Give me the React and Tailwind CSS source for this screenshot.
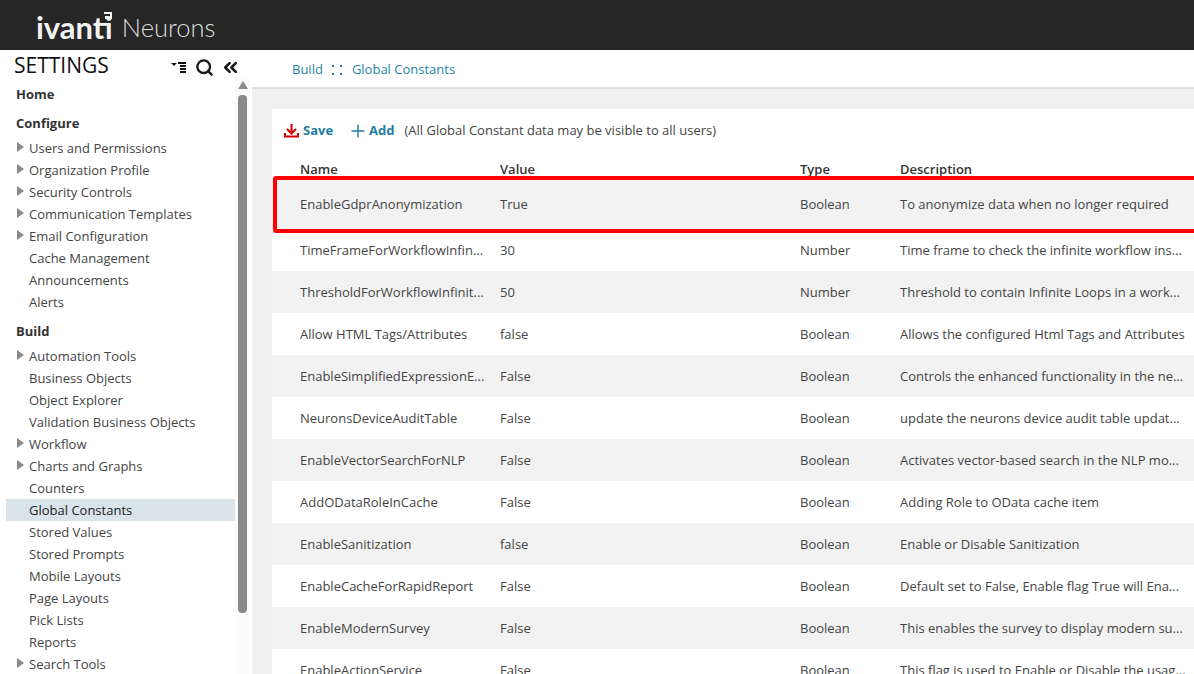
import { Search, ChevronsLeft, Plus } from 'lucide-react'

const nav = [
  { title: 'Home' },
  {
    title: 'Configure',
    items: [
      ['Users and Permissions', true],
      ['Organization Profile', true],
      ['Security Controls', true],
      ['Communication Templates', true],
      ['Email Configuration', true],
      ['Cache Management'],
      ['Announcements'],
      ['Alerts'],
    ],
  },
  {
    title: 'Build',
    items: [
      ['Automation Tools', true],
      ['Business Objects'],
      ['Object Explorer'],
      ['Validation Business Objects'],
      ['Workflow', true],
      ['Charts and Graphs', true],
      ['Counters'],
      ['Global Constants'],
      ['Stored Values'],
      ['Stored Prompts'],
      ['Mobile Layouts'],
      ['Page Layouts'],
      ['Pick Lists'],
      ['Reports'],
      ['Search Tools', true],
    ],
  },
]

const rows = [
  ['EnableGdprAnonymization', 'True', 'Boolean', 'To anonymize data when no longer required'],
  ['TimeFrameForWorkflowInfin...', '30', 'Number', 'Time frame to check the infinite workflow ins...'],
  ['ThresholdForWorkflowInfinit...', '50', 'Number', 'Threshold to contain Infinite Loops in a work...'],
  ['Allow HTML Tags/Attributes', 'false', 'Boolean', 'Allows the configured Html Tags and Attributes'],
  ['EnableSimplifiedExpressionE...', 'False', 'Boolean', 'Controls the enhanced functionality in the ne...'],
  ['NeuronsDeviceAuditTable', 'False', 'Boolean', 'update the neurons device audit table updat...'],
  ['EnableVectorSearchForNLP', 'False', 'Boolean', 'Activates vector-based search in the NLP mo...'],
  ['AddODataRoleInCache', 'False', 'Boolean', 'Adding Role to OData cache item'],
  ['EnableSanitization', 'false', 'Boolean', 'Enable or Disable Sanitization'],
  ['EnableCacheForRapidReport', 'False', 'Boolean', 'Default set to False, Enable flag True will Ena...'],
  ['EnableModernSurvey', 'False', 'Boolean', 'This enables the survey to display modern su...'],
  ['EnableActionService', 'False', 'Boolean', 'This flag is used to Enable or Disable the usag...'],
]

const Sidebar = () => (
  <aside className="w-[252px] shrink-0 h-full flex flex-col bg-white">
    <div className="h-[27px] shrink-0 pl-[14px] relative">
      <span className="block text-[21px] leading-[30px] text-[#111]">SETTINGS</span>
      <div className="absolute left-[170px] top-[7px] flex items-center">
        <svg width="16" height="14" viewBox="0 0 16 14" fill="#111">
          <path d="M1 2h6L4 5z" />
          <rect x="8" y="1" width="8" height="2" />
          <rect x="10" y="4" width="6" height="2" />
          <rect x="10" y="7" width="6" height="2" />
          <rect x="10" y="10" width="6" height="2" />
        </svg>
        <Search size={19} strokeWidth={3} className="ml-[9px] text-[#1a1a1a]" />
        <ChevronsLeft size={21} strokeWidth={3} className="ml-[6px] text-[#1a1a1a]" />
      </div>
    </div>
    <div className="flex-1 flex min-h-0">
      <nav className="w-[235px] shrink-0 pl-[6px] pt-[6px] overflow-hidden">
        {nav.map((sec) => (
          <div key={sec.title} className="mb-[7px]">
            <div className="h-[22px] pl-[10px] mb-[3px] leading-[22px] font-bold text-[13px] text-[#333]">
              {sec.title}
            </div>
            {sec.items &&
              sec.items.map(([label, arrow]) => (
                <div
                  key={label}
                  className={`h-[22px] pl-[23px] leading-[22px] text-[13px] relative ${
                    label === 'Global Constants' ? 'bg-[#d9e3ea] text-[#222]' : 'text-[#444]'
                  }`}
                >
                  {arrow && (
                    <span className="absolute left-[11px] top-[5px] w-0 h-0 border-y-[5px] border-y-transparent border-l-[7px] border-l-[#8a8a8a]" />
                  )}
                  {label}
                </div>
              ))}
          </div>
        ))}
      </nav>
      <div className="w-[15px] shrink-0 bg-[#fbfbfb] flex flex-col items-center">
        <span className="mt-[4px] w-0 h-0 border-x-[5px] border-x-transparent border-b-[8px] border-b-[#8a8a8a]" />
        <div className="mt-[6px] w-[9px] h-[518px] rounded-[4px] bg-[#8a8a8a]" />
      </div>
    </div>
  </aside>
)

const Toolbar = () => (
  <div className="h-[43px] mb-[2px] flex items-center pl-[12px] text-[13px]">
    <svg width="15" height="15" viewBox="0 0 15 15" fill="none" stroke="#d40000" strokeWidth="2">
      <path d="M7.5 1v9M3 6l4.5 4.5L12 6" />
      <path d="M1 10v3.5h13V10" />
    </svg>
    <span className="ml-[4px] font-bold text-[#1f7e9e]">Save</span>
    <Plus size={20} strokeWidth={1.8} className="ml-[15px] text-[#1f7e9e]" />
    <span className="ml-[1px] font-bold text-[#1f7e9e]">Add</span>
    <span className="ml-[10px] text-[#444]">(All Global Constant data may be visible to all users)</span>
  </div>
)

const Table = () => (
  <div className="relative">
    <div className="grid grid-cols-[200px_300px_100px_1fr] pl-[28px] h-[24px] items-end text-[13px] font-semibold text-[#333] leading-[18px]">
      <span>Name</span>
      <span>Value</span>
      <span>Type</span>
      <span>Description</span>
    </div>
    <div className="border-t-2 border-[#e4e4e4]">
      {rows.map((r, i) => (
        <div
          key={r[0]}
          className={`grid grid-cols-[200px_300px_100px_1fr] pl-[28px] items-center text-[13px] text-[#444] whitespace-nowrap ${
            i === 0 ? 'h-[49px] pt-[1px]' : 'h-[42px] pt-[2px]'
          } ${i % 2 === 0 ? 'bg-[#f2f2f2]' : 'bg-white'}`}
        >
          {r.map((c, j) => (
            <span key={j} className="overflow-hidden">
              {c}
            </span>
          ))}
        </div>
      ))}
    </div>
    <div className="absolute left-[1px] right-[-6px] top-[22px] h-[57px] border-4 border-[#ff0000] rounded-[3px] pointer-events-none" />
  </div>
)

export default function App() {
  return (
    <div
      className="w-[1194px] h-[674px] overflow-hidden flex flex-col bg-white"
      style={{ fontFamily: '"Open Sans", sans-serif' }}
    >
      <header className="h-[50px] shrink-0 bg-[#262626] flex items-center pl-[36px] pt-[4px] relative">
        <span className="text-[31px] font-bold text-[#f2f2f2]" style={{ fontFamily: 'Lato, sans-serif' }}>
          ivanti
        </span>
        <svg className="absolute left-[103px] top-[12px]" width="9" height="9" viewBox="0 0 9 9" fill="#f2f2f2">
          <path d="M1 0h8v7H7V2H1z" />
          <rect x="2" y="4" width="3" height="3" />
        </svg>
        <span className="ml-[9px] text-[25.5px] font-light text-[#dcdcdc]" style={{ fontFamily: 'Lato, sans-serif' }}>
          Neurons
        </span>
      </header>
      <div className="flex-1 flex min-h-0">
        <Sidebar />
        <main className="flex-1 min-w-0 flex flex-col">
          <div className="h-[39px] shrink-0 flex items-center pl-[40px] pt-[2px] text-[13px] text-[#1f86a8] border-b-2 border-[#e0e0e0] bg-white">
            <span>Build</span>
            <svg className="ml-[9px] mr-[10px]" width="10" height="12" viewBox="0 0 10 12" fill="#1f86a8">
              <rect x="0" y="1" width="2" height="2" />
              <rect x="8" y="1" width="2" height="2" />
              <rect x="0" y="9" width="2" height="2" />
              <rect x="8" y="9" width="2" height="2" />
            </svg>
            <span>Global Constants</span>
          </div>
          <div className="flex-1 bg-[#f0f0f0] pl-[20px] pt-[20px] min-h-0 overflow-hidden">
            <div className="bg-white h-full overflow-hidden">
              <Toolbar />
              <Table />
            </div>
          </div>
        </main>
      </div>
    </div>
  )
}
